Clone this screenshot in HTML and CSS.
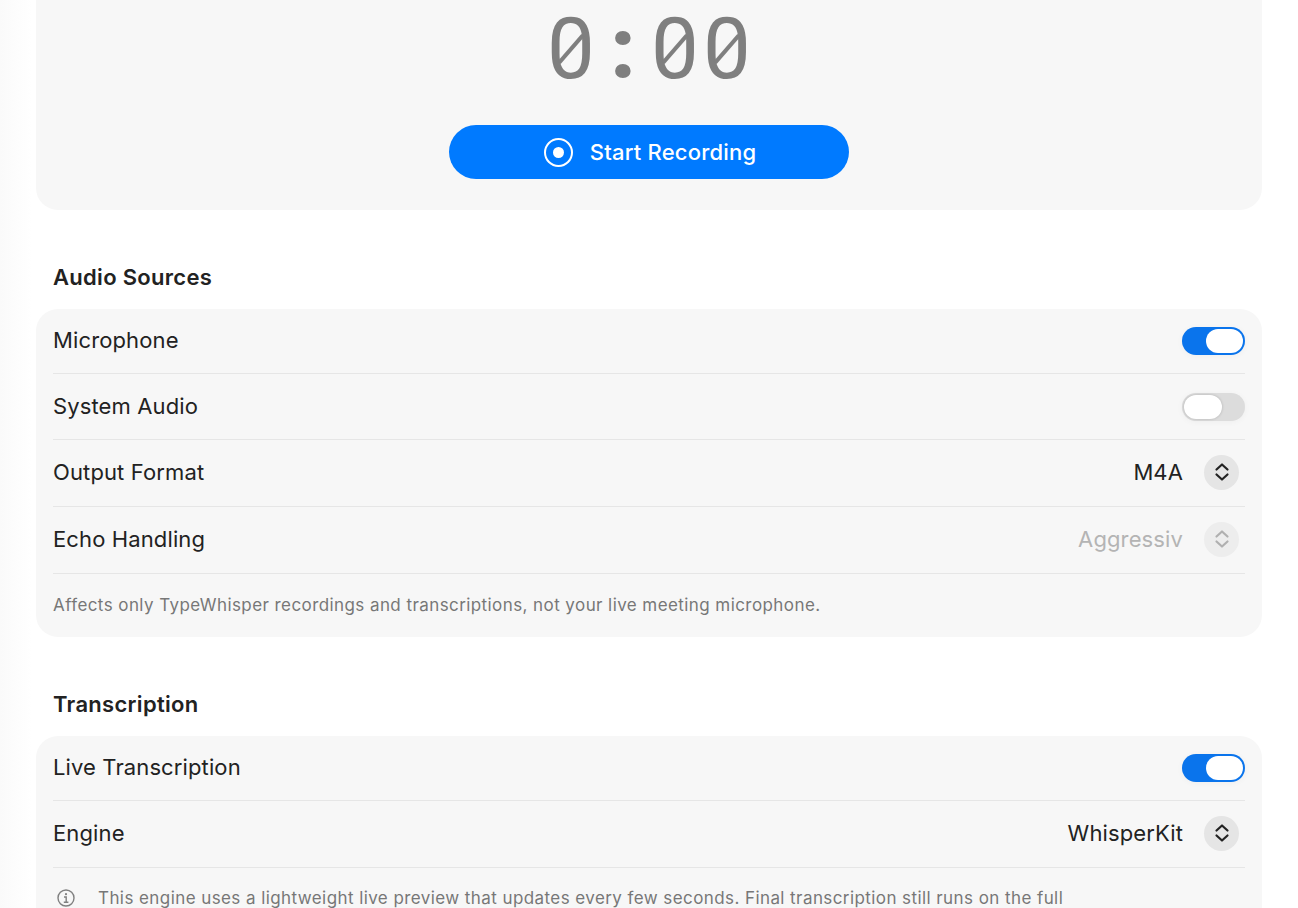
FILE: index.html
```html
<!DOCTYPE html>
<html lang="en">
<head>
    <meta charset="UTF-8">
    <meta name="viewport" content="width=device-width, initial-scale=1.0">
    <title>Recorder</title>
    <link rel="stylesheet" href="styles.css">
</head>
<body>
    <div class="page">
        <section class="card timer-card">
            <div class="timer">
                <span class="digit">0</span><span class="colon">:</span><span class="digit">0</span><span class="digit">0</span>
            </div>
            <button class="record-button">
                <span class="record-icon"></span>
                Start Recording
            </button>
        </section>

        <h2 class="section-title">Audio Sources</h2>
        <section class="card">
            <div class="row row-first">
                <span class="row-label">Microphone</span>
                <span class="toggle on"></span>
            </div>
            <div class="row row-second">
                <span class="row-label">System Audio</span>
                <span class="toggle"></span>
            </div>
            <div class="row">
                <span class="row-label">Output Format</span>
                <div class="picker">
                    <span class="picker-value">M4A</span>
                    <span class="stepper">
                        <svg viewBox="0 0 16 20" width="16" height="20"><path d="M2.5 7.5 8 2.5l5.5 5M2.5 12.5 8 17.5l5.5-5"/></svg>
                    </span>
                </div>
            </div>
            <div class="row disabled">
                <span class="row-label">Echo Handling</span>
                <div class="picker">
                    <span class="picker-value">Aggressiv</span>
                    <span class="stepper">
                        <svg viewBox="0 0 16 20" width="16" height="20"><path d="M2.5 7.5 8 2.5l5.5 5M2.5 12.5 8 17.5l5.5-5"/></svg>
                    </span>
                </div>
            </div>
            <p class="note">Affects only TypeWhisper recordings and transcriptions, not your live meeting microphone.</p>
        </section>

        <h2 class="section-title">Transcription</h2>
        <section class="card">
            <div class="row row-first">
                <span class="row-label">Live Transcription</span>
                <span class="toggle on"></span>
            </div>
            <div class="row">
                <span class="row-label">Engine</span>
                <div class="picker">
                    <span class="picker-value">WhisperKit</span>
                    <span class="stepper">
                        <svg viewBox="0 0 16 20" width="16" height="20"><path d="M2.5 7.5 8 2.5l5.5 5M2.5 12.5 8 17.5l5.5-5"/></svg>
                    </span>
                </div>
            </div>
            <div class="info">
                <svg class="info-icon" viewBox="0 0 18 18" width="18" height="18">
                    <circle cx="9" cy="9" r="8"/>
                    <path d="M7 8h2.2v5M6.8 13.2h4.6"/>
                    <circle class="info-dot" cx="9" cy="5.2" r="1.1"/>
                </svg>
                <p class="info-text">This engine uses a lightweight live preview that updates every few seconds. Final transcription still runs on the full</p>
            </div>
        </section>
    </div>
</body>
</html>
```

FILE: styles.css
```css
:root {
    --blue: #007aff;
    --card: #f7f7f7;
    --line: #e6e6e6;
    --text: #222222;
    --muted: #777777;
}

html, body {
    margin: 0;
    height: 100%;
    overflow: hidden;
}

body {
    font-family: 'Inter', 'Liberation Sans', sans-serif;
    color: var(--text);
    background: linear-gradient(to right, #fafafa, #ffffff 32px);
}

.page {
    padding: 0 36px;
}

.card {
    background-color: var(--card);
    border-radius: 22px;
    padding: 0 17px;
}

.timer-card {
    height: 210px;
    border-radius: 0 0 22px 22px;
    display: flex;
    flex-direction: column;
    align-items: center;
    box-sizing: border-box;
}

.timer {
    display: flex;
    height: 125px;
    font-family: 'Roboto', 'Liberation Sans', sans-serif;
    font-size: 85px;
    line-height: 99px;
    color: #7f7f7f;
}

.digit, .colon {
    width: 52px;
    text-align: center;
}

.colon {
    font-weight: 900;
}

.digit {
    position: relative;
}

.digit::after {
    content: "";
    position: absolute;
    left: 8px;
    top: 47px;
    width: 36px;
    height: 4px;
    background-color: #7f7f7f;
    transform: rotate(-49deg);
}

.record-button {
    width: 400px;
    height: 54px;
    border: none;
    border-radius: 27px;
    background-color: var(--blue);
    color: white;
    font-family: inherit;
    font-size: 22px;
    font-weight: 500;
    letter-spacing: 0.2px;
    display: flex;
    align-items: center;
    justify-content: center;
    gap: 17px;
    padding: 0 0 0 2px;
}

.record-icon {
    width: 25px;
    height: 25px;
    border: 2px solid white;
    border-radius: 50%;
    display: flex;
    align-items: center;
    justify-content: center;
}

.record-icon::after {
    content: "";
    width: 11px;
    height: 11px;
    background-color: white;
    border-radius: 50%;
}

.section-title {
    margin: 0;
    padding: 54px 17px 18px;
    font-size: 22px;
    font-weight: 600;
    line-height: 27px;
    letter-spacing: 0.3px;
}

.row {
    display: flex;
    align-items: center;
    justify-content: space-between;
    box-sizing: border-box;
    height: 67px;
    border-bottom: 1.5px solid var(--line);
    font-size: 22px;
    letter-spacing: 0.12px;
}

.row-first {
    height: 65px;
}

.row-second {
    height: 66px;
}

.row-label {
    margin-bottom: 2px;
}

.toggle {
    width: 63px;
    height: 28px;
    border-radius: 14px;
    background-color: #dcdcdc;
    position: relative;
    box-shadow: 0 1px 6px rgba(0, 0, 0, 0.04);
}

.toggle::after {
    content: "";
    position: absolute;
    top: 2px;
    left: 2px;
    width: 38px;
    height: 24px;
    border-radius: 12px;
    background-color: white;
    box-shadow: 0 0 3px rgba(0, 0, 0, 0.2);
}

.toggle.on {
    background-color: #0a74ec;
}

.toggle.on::after {
    left: 24px;
    width: 37px;
    box-shadow: none;
}

.picker {
    display: flex;
    align-items: center;
    gap: 21px;
    margin-right: 6px;
    margin-bottom: 2px;
}

.stepper {
    width: 35px;
    height: 35px;
    border-radius: 50%;
    background-color: #e5e5e5;
    display: flex;
    align-items: center;
    justify-content: center;
}

.stepper path {
    fill: none;
    stroke: #222222;
    stroke-width: 2.2;
    stroke-linecap: round;
    stroke-linejoin: round;
}

.disabled .picker-value {
    color: #b4b4b4;
}

.disabled .stepper {
    background-color: #ededed;
}

.disabled .stepper path {
    stroke: #b0b0b0;
}

.note {
    margin: 0;
    height: 63px;
    line-height: 63px;
    font-size: 17px;
    letter-spacing: 0.42px;
    color: var(--muted);
}

.info {
    display: flex;
    align-items: flex-start;
    gap: 23px;
    padding: 19px 4px 40px;
}

.info-icon {
    margin-top: 2px;
}

.info-icon circle {
    fill: none;
    stroke: #808080;
    stroke-width: 1.4;
}

.info-icon path {
    fill: none;
    stroke: #808080;
    stroke-width: 1.4;
}

.info-icon .info-dot {
    fill: #808080;
    stroke: none;
}

.info-text {
    margin: 0;
    font-size: 17px;
    line-height: 22px;
    letter-spacing: 0.42px;
    color: var(--muted);
    white-space: nowrap;
}
```
